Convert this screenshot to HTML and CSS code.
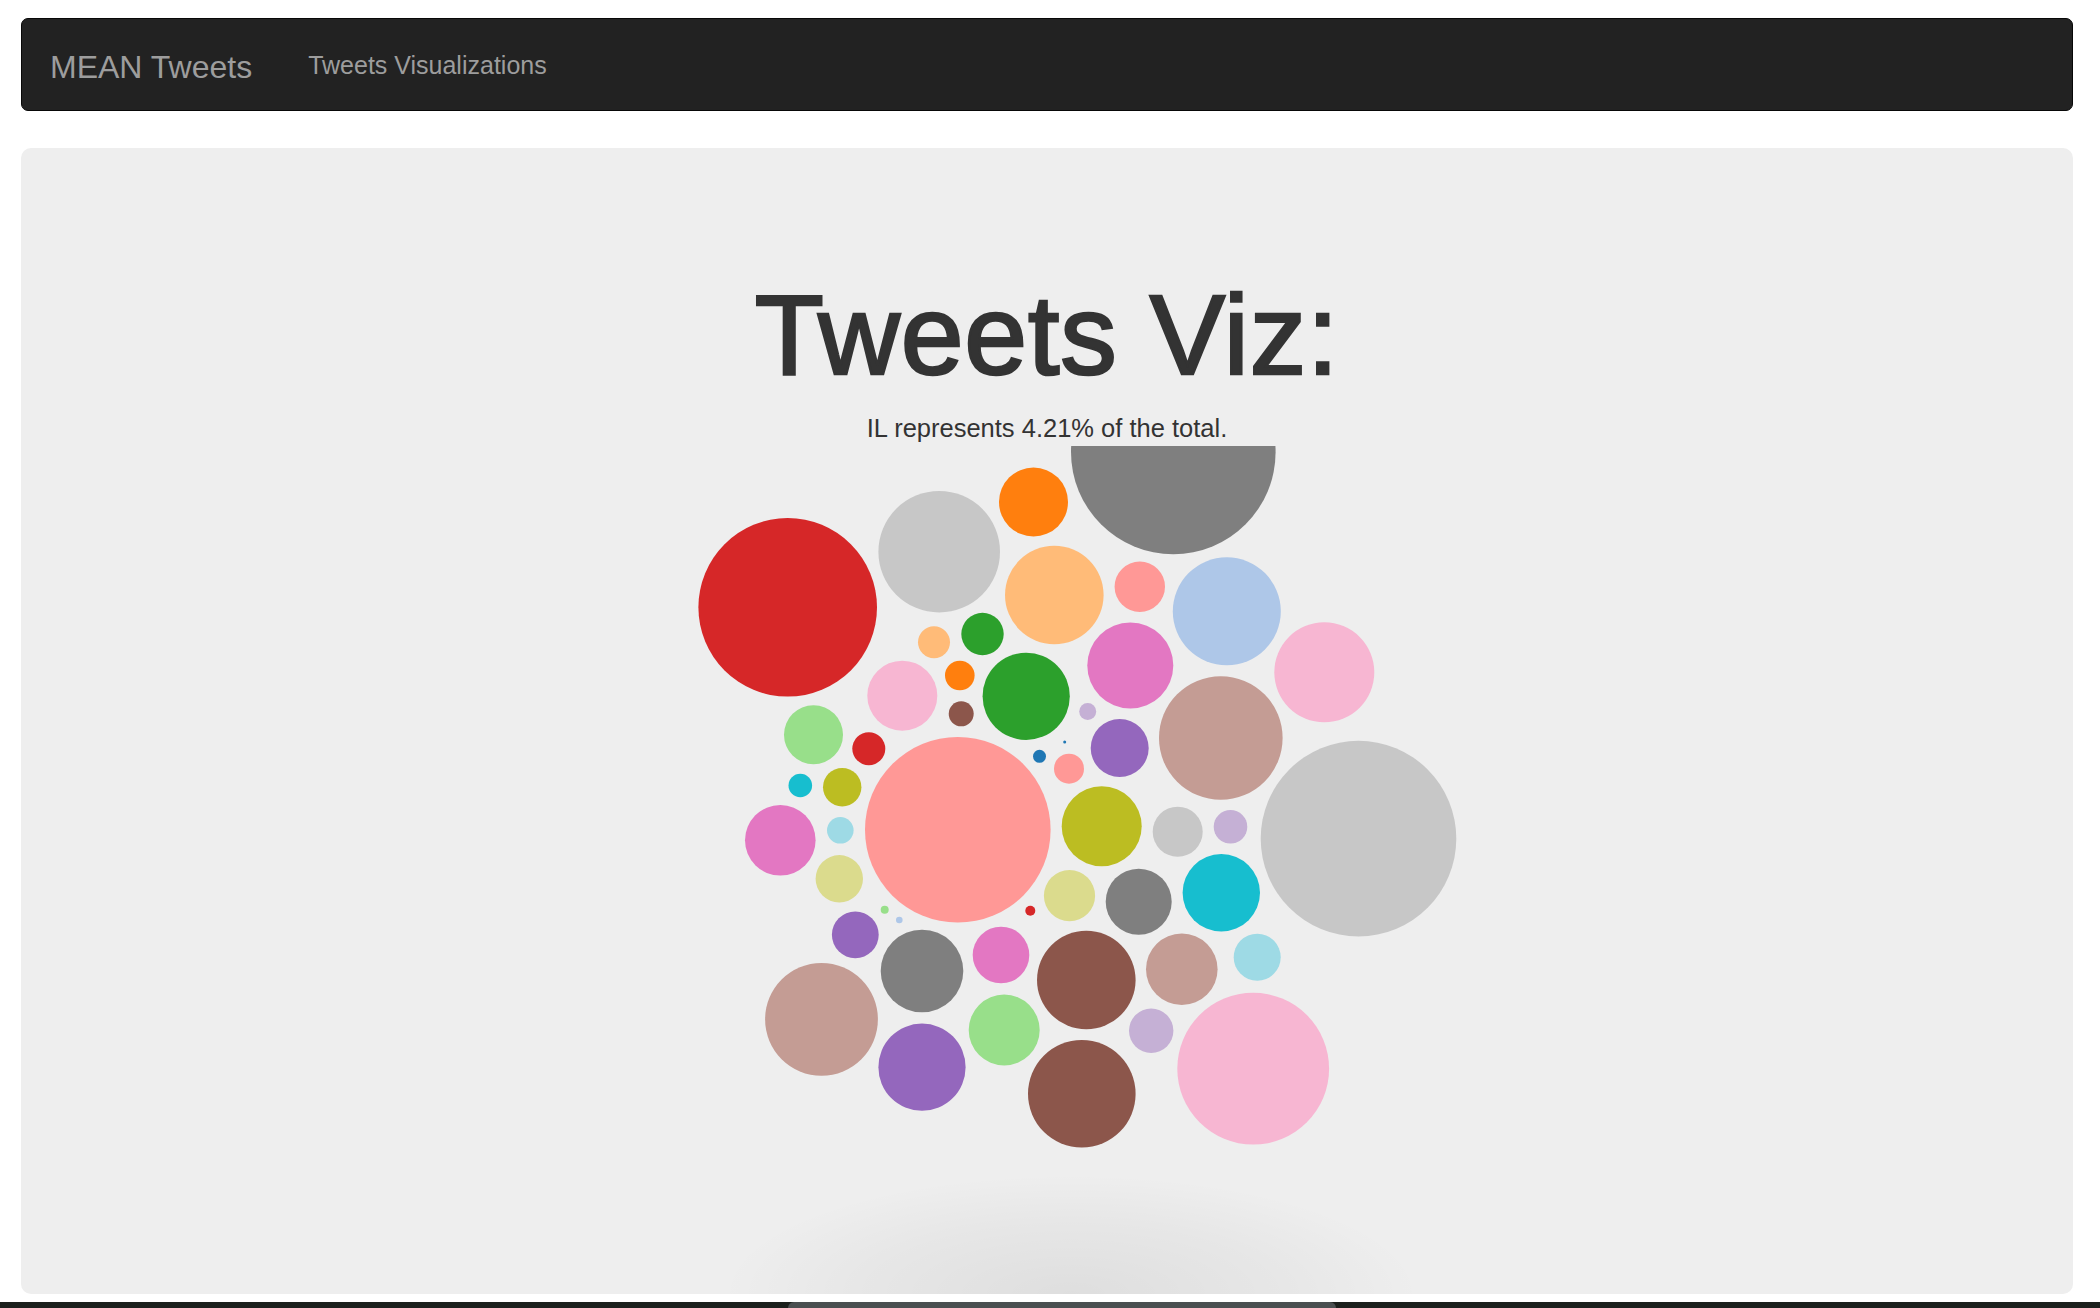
FILE: index.html
```html
<!DOCTYPE html>
<html lang="en">
<head>
<meta charset="utf-8">
<title>MEAN Tweets</title>
<link rel="stylesheet" href="styles.css">
</head>
<body>
<nav class="navbar">
  <a class="brand" href="#">MEAN Tweets</a>
  <a class="nav-link" href="#">Tweets Visualizations</a>
</nav>
<main class="jumbotron">
  <h1 class="title">Tweets Viz:</h1>
  <p class="subtitle">IL represents 4.21% of the total.</p>
  <svg class="bubbles" width="840" height="720" viewBox="0 0 840 720">
    <circle cx="160.7" cy="161.3" r="89.3" fill="#d62728"/>
    <circle cx="312.2" cy="105.7" r="60.8" fill="#c7c7c7"/>
    <circle cx="406.5" cy="56" r="34.5" fill="#ff7f0e"/>
    <circle cx="427.3" cy="149" r="49.3" fill="#ffbb78"/>
    <circle cx="307" cy="196.3" r="16" fill="#ffbb78"/>
    <circle cx="355.5" cy="188" r="21.2" fill="#2ca02c"/>
    <circle cx="275.3" cy="249.7" r="35" fill="#f7b6d2"/>
    <circle cx="332.8" cy="229.5" r="14.8" fill="#ff7f0e"/>
    <circle cx="334.2" cy="267.8" r="12.5" fill="#8c564b"/>
    <circle cx="399.2" cy="250.3" r="43.6" fill="#2ca02c"/>
    <circle cx="186.5" cy="288.7" r="29.5" fill="#98df8a"/>
    <circle cx="241.8" cy="302.7" r="16.5" fill="#d62728"/>
    <circle cx="173.3" cy="339.5" r="11.8" fill="#17becf"/>
    <circle cx="215.2" cy="341.2" r="19.2" fill="#bcbd22"/>
    <circle cx="412.5" cy="310.3" r="6.5" fill="#1f77b4"/>
    <circle cx="437.7" cy="296" r="1.5" fill="#1f77b4"/>
    <circle cx="442" cy="322.7" r="15" fill="#ff9896"/>
    <circle cx="330.8" cy="383.8" r="92.8" fill="#ff9896"/>
    <circle cx="460.7" cy="265.5" r="8.5" fill="#c5b0d5"/>
    <circle cx="546.3" cy="6" r="102.3" fill="#7f7f7f"/>
    <circle cx="512.8" cy="140.7" r="25.2" fill="#ff9896"/>
    <circle cx="599.8" cy="165.3" r="54" fill="#aec7e8"/>
    <circle cx="503.3" cy="219.5" r="43" fill="#e377c2"/>
    <circle cx="697.3" cy="226.3" r="50" fill="#f7b6d2"/>
    <circle cx="593.8" cy="292" r="61.8" fill="#c49c94"/>
    <circle cx="492.7" cy="302" r="29" fill="#9467bd"/>
    <circle cx="731.5" cy="392.6" r="97.8" fill="#c7c7c7"/>
    <circle cx="474.7" cy="380.2" r="40" fill="#bcbd22"/>
    <circle cx="550.7" cy="385.7" r="25" fill="#c7c7c7"/>
    <circle cx="603.5" cy="380.8" r="16.8" fill="#c5b0d5"/>
    <circle cx="594.3" cy="446.8" r="38.7" fill="#17becf"/>
    <circle cx="511.7" cy="455.7" r="33" fill="#7f7f7f"/>
    <circle cx="442.5" cy="449.7" r="25.6" fill="#dbdb8d"/>
    <circle cx="459.3" cy="534" r="49.3" fill="#8c564b"/>
    <circle cx="554.8" cy="523.2" r="35.8" fill="#c49c94"/>
    <circle cx="630.2" cy="511.2" r="23.5" fill="#9edae5"/>
    <circle cx="524.2" cy="584.8" r="22.2" fill="#c5b0d5"/>
    <circle cx="626.2" cy="622.7" r="75.9" fill="#f7b6d2"/>
    <circle cx="454.8" cy="647.8" r="53.8" fill="#8c564b"/>
    <circle cx="153.3" cy="394.3" r="35.3" fill="#e377c2"/>
    <circle cx="213.3" cy="384.3" r="13.3" fill="#9edae5"/>
    <circle cx="212.3" cy="432.8" r="23.7" fill="#dbdb8d"/>
    <circle cx="257.7" cy="463.7" r="4" fill="#98df8a"/>
    <circle cx="272.3" cy="474" r="3.3" fill="#aec7e8"/>
    <circle cx="228.3" cy="488.8" r="23.4" fill="#9467bd"/>
    <circle cx="295" cy="525" r="41.3" fill="#7f7f7f"/>
    <circle cx="374" cy="509" r="28.3" fill="#e377c2"/>
    <circle cx="403.3" cy="464.7" r="5" fill="#d62728"/>
    <circle cx="194.5" cy="573.3" r="56.4" fill="#c49c94"/>
    <circle cx="295" cy="621.2" r="43.6" fill="#9467bd"/>
    <circle cx="377.2" cy="584" r="35.5" fill="#98df8a"/>
  </svg>
  <div class="dock-shadow"></div>
</main>
<div class="desktop">
  <div class="dock"></div>
</div>
</body>
</html>
```

FILE: styles.css
```css
* {
  box-sizing: border-box;
}

html, body {
  margin: 0;
  padding: 0;
  background: #ffffff;
  overflow: hidden;
}

body {
  font-family: "Liberation Sans", Arial, Helvetica, sans-serif;
  color: #333333;
  width: 2100px;
  height: 1308px;
}

.navbar {
  display: flex;
  align-items: flex-start;
  height: 93px;
  margin: 18px 27px 0 21px;
  padding-left: 28px;
  background: #222222;
  border: 1px solid #080808;
  border-radius: 7px;
}

.brand {
  color: #9d9d9d;
  text-decoration: none;
  font-size: 32px;
  line-height: 32px;
  margin-top: 32px;
}

.nav-link {
  color: #9d9d9d;
  text-decoration: none;
  font-size: 25px;
  line-height: 25px;
  margin-top: 34px;
  margin-left: 56px;
}

.jumbotron {
  position: relative;
  display: flex;
  flex-direction: column;
  align-items: center;
  height: 1146px;
  margin: 37px 27px 0 21px;
  padding-top: 125px;
  background: #eeeeee;
  border-radius: 10px;
  overflow: hidden;
}

.title {
  margin: 0;
  font-size: 113px;
  line-height: 124px;
  font-weight: 500;
  color: #333333;
  -webkit-text-stroke: 2.6px #333333;
  letter-spacing: 0.8px;
}

.subtitle {
  margin: 14px 0 0 0;
  font-size: 25.5px;
  line-height: 35px;
  color: #333333;
}

.bubbles {
  display: block;
  flex: none;
}

.dock-shadow {
  position: absolute;
  left: 700px;
  bottom: 0;
  width: 700px;
  height: 120px;
  background: radial-gradient(ellipse 50% 100% at 50% 100%, rgba(0, 0, 0, 0.065), rgba(0, 0, 0, 0.03) 60%, rgba(0, 0, 0, 0) 100%);
  pointer-events: none;
}

.desktop {
  position: relative;
  height: 6px;
  margin-top: 8px;
  background: #1b201c;
}

.dock {
  position: absolute;
  left: 788px;
  top: 0;
  width: 548px;
  height: 6px;
  background: #4a4f50;
  border-radius: 6px 6px 0 0;
}
```
